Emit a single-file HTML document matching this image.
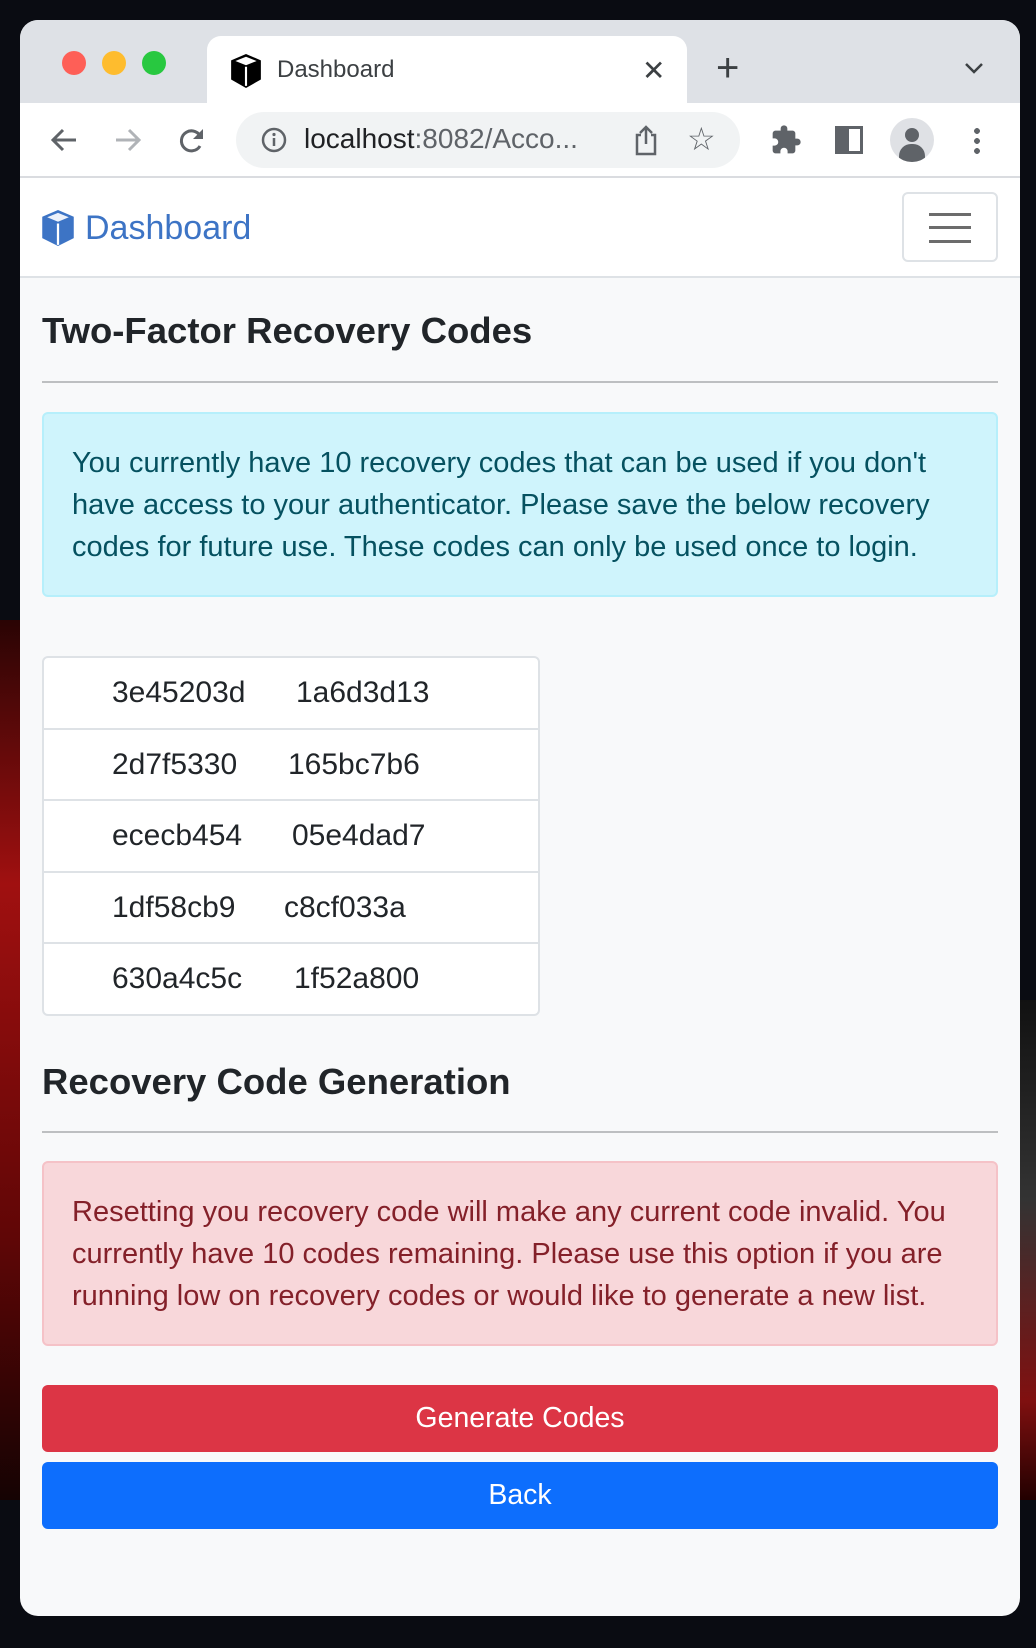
<!DOCTYPE html>
<html><head><meta charset="utf-8"><style>
*{box-sizing:border-box;margin:0;padding:0}
body{width:1036px;height:1648px;overflow:hidden;background:#0a0c12;font-family:"Liberation Sans",sans-serif;position:relative}
.bgred{position:absolute;left:0;top:620px;width:40px;height:880px;background:linear-gradient(#2a0404,#a01010 30%,#600606 70%,#150303)}
.bgred2{position:absolute;right:0;top:1000px;width:30px;height:500px;background:linear-gradient(#111,#333 40%,#801010 80%,#200)}
.win{position:absolute;left:20px;top:20px;width:1000px;height:1596px;border-radius:18px;overflow:hidden;background:#f8f9fa}
.tabbar{position:absolute;left:0;top:0;width:1000px;height:83px;background:#dee1e6}
.dot{position:absolute;top:31px;width:24px;height:24px;border-radius:50%}
.tab{position:absolute;left:187px;top:16px;width:480px;height:67px;background:#fff;border-radius:14px 14px 0 0}
.toolbar{position:absolute;left:0;top:83px;width:1000px;height:75px;background:#fff;border-bottom:2px solid #dadce0}
.url{position:absolute;left:216px;top:92px;width:504px;height:56px;border-radius:28px;background:#f1f3f4}
.nav{position:absolute;left:0;top:158px;width:1000px;height:100px;background:#fff;border-bottom:2px solid #dee2e6}
h1,h2{position:absolute;left:22px;font-weight:bold;color:#212529;font-size:36.5px}
.hr{position:absolute;left:22px;width:956px;height:2px;background:#bdbfc1}
.alert{position:absolute;left:22px;width:956px;border-radius:6px;padding:28px 28px 20px;font-size:29px;line-height:42px}
.tbl{position:absolute;left:22px;top:636px;width:498px;height:360px;border:2px solid #dee2e6;border-radius:6px;background:#fff}
.row{position:relative;height:71.6px;border-bottom:2px solid #dee2e6;font-size:30px;color:#212529}
.row:last-child{border-bottom:none}
.row span{position:absolute;top:18px}
.btn{position:absolute;left:22px;width:956px;height:67px;border-radius:6px;color:#fff;font-size:28.5px;text-align:center;line-height:67px}
</style></head><body>
<div class="bgred"></div><div class="bgred2"></div>
<div class="win">
<div class="tabbar">
<div class="dot" style="left:42px;background:#fe5f57"></div>
<div class="dot" style="left:82px;background:#febc2e"></div>
<div class="dot" style="left:122px;background:#28c840"></div>
<div class="tab">
<svg style="position:absolute;left:22px;top:18px" width="34" height="34" viewBox="0 0 16 16"><path d="M8 0l7 3v9l-7 4-7-4V3z" fill="#000"/><path d="M3 3.3l5-2 5 2-5 2z" fill="#fff"/><path d="M8 6v9" stroke="#fff" stroke-width="1"/></svg>
<div style="position:absolute;left:70px;top:20px;font-size:24px;color:#3c4043">Dashboard</div>
<div style="position:absolute;left:435px;top:18px;font-size:28px;color:#3c4043">✕</div>
</div>
<div style="position:absolute;left:696px;top:26px;font-size:40px;color:#3c4043;font-weight:300">+</div>
<svg style="position:absolute;left:944px;top:42px" width="20" height="14"><path d="M2 2l8 8 8-8" stroke="#3c4043" stroke-width="2.5" fill="none"/></svg>
</div>
<div class="toolbar"></div>
<svg style="position:absolute;left:28px;top:104px" width="32" height="32"><path d="M28 16H6M15 6L5 16l10 10" stroke="#5f6368" stroke-width="3" fill="none"/></svg>
<svg style="position:absolute;left:92px;top:104px" width="32" height="32"><path d="M4 16h22M17 6l10 10-10 10" stroke="#b0b3b7" stroke-width="3" fill="none"/></svg>
<svg style="position:absolute;left:156px;top:104px" width="32" height="32"><path d="M25 14A10 10 0 1 0 24 22" stroke="#5f6368" stroke-width="3" fill="none"/><path d="M27 5v10H17z" fill="#5f6368"/></svg>
<div class="url"></div>
<svg style="position:absolute;left:240px;top:106px" width="28" height="28"><circle cx="14" cy="14" r="11" stroke="#5f6368" stroke-width="2.5" fill="none"/><path d="M14 12v8" stroke="#5f6368" stroke-width="2.5"/><circle cx="14" cy="8.5" r="1.6" fill="#5f6368"/></svg>
<div style="position:absolute;left:284px;top:103px;font-size:28px;color:#202124">localhost<span style="color:#5f6368">:8082/Acco...</span></div>
<svg style="position:absolute;left:612px;top:104px" width="28" height="32"><path d="M9 11H5v19h18V11h-4M14 20V3M8 9l6-6 6 6" stroke="#5f6368" stroke-width="2.5" fill="none"/></svg>
<div style="position:absolute;left:667px;top:100px;font-size:32px;color:#5f6368">☆</div>
<svg style="position:absolute;left:750px;top:104px" width="32" height="32" viewBox="0 0 24 24"><path d="M20.5 11H19V7a2 2 0 0 0-2-2h-4V3.5a2.5 2.5 0 0 0-5 0V5H4a2 2 0 0 0-2 2v3.8h1.5a2.7 2.7 0 0 1 0 5.4H2V20a2 2 0 0 0 2 2h3.8v-1.5a2.7 2.7 0 0 1 5.4 0V22H17a2 2 0 0 0 2-2v-4h1.5a2.5 2.5 0 0 0 0-5z" fill="#5f6368"/></svg>
<div style="position:absolute;left:815px;top:106px;width:28px;height:28px;border:3px solid #5f6368;border-left-width:14px"></div>
<div style="position:absolute;left:870px;top:98px;width:44px;height:44px;border-radius:50%;background:#dfe1e5;overflow:hidden"><div style="position:absolute;left:15px;top:10px;width:14px;height:14px;border-radius:50%;background:#5f6368"></div><div style="position:absolute;left:9px;top:26px;width:26px;height:20px;border-radius:12px 12px 0 0;background:#5f6368"></div></div>
<div style="position:absolute;left:954px;top:106px;width:6px;height:30px;background:radial-gradient(circle,#5f6368 2.8px,transparent 3px) 0 0/6px 10px"></div>
<div class="nav">
<svg style="position:absolute;left:20px;top:32px" width="36" height="36" viewBox="0 0 16 16"><path d="M8 0l7 3v9.5L8 16 1 12.5V3z" fill="#3d74c5"/><path d="M3.2 3.2L8 1.3l4.8 1.9L8 5.2z" fill="#fff" opacity=".9"/><path d="M8 6v9.5" stroke="#fff" stroke-width="1"/></svg>
<div style="position:absolute;left:65px;top:31px;font-size:34px;color:#3d74c5">Dashboard</div>
<div style="position:absolute;left:882px;top:14px;width:96px;height:70px;border:2px solid #dee2e6;border-radius:6px"><div style="position:absolute;left:25px;top:19px;width:42px;height:30px;border-top:3px solid #6c6c6c;border-bottom:3px solid #6c6c6c"><div style="margin-top:10px;height:3px;background:#6c6c6c"></div></div></div>
</div>
<h1 style="top:290px">Two-Factor Recovery Codes</h1>
<div class="hr" style="top:361px"></div>
<div class="alert" style="top:392px;height:185px;background:#cff4fc;border:2px solid #b6effb;color:#055160">You currently have 10 recovery codes that can be used if you don't have access to your authenticator. Please save the below recovery codes for future use. These codes can only be used once to login.</div>
<div class="tbl">
<div class="row"><span style="left:68px">3e45203d</span><span style="left:252px">1a6d3d13</span></div>
<div class="row"><span style="left:68px">2d7f5330</span><span style="left:244px">165bc7b6</span></div>
<div class="row"><span style="left:68px">ececb454</span><span style="left:248px">05e4dad7</span></div>
<div class="row"><span style="left:68px">1df58cb9</span><span style="left:240px">c8cf033a</span></div>
<div class="row"><span style="left:68px">630a4c5c</span><span style="left:250px">1f52a800</span></div>
</div>
<h2 style="top:1041px">Recovery Code Generation</h2>
<div class="hr" style="top:1111px"></div>
<div class="alert" style="top:1141px;height:185px;background:#f8d7da;border:2px solid #f5c2c7;color:#842029">Resetting you recovery code will make any current code invalid. You currently have 10 codes remaining. Please use this option if you are running low on recovery codes or would like to generate a new list.</div>
<div class="btn" style="top:1365px;background:#dc3545">Generate Codes</div>
<div class="btn" style="top:1442px;background:#0d6efd">Back</div>
</div>
</body></html>
